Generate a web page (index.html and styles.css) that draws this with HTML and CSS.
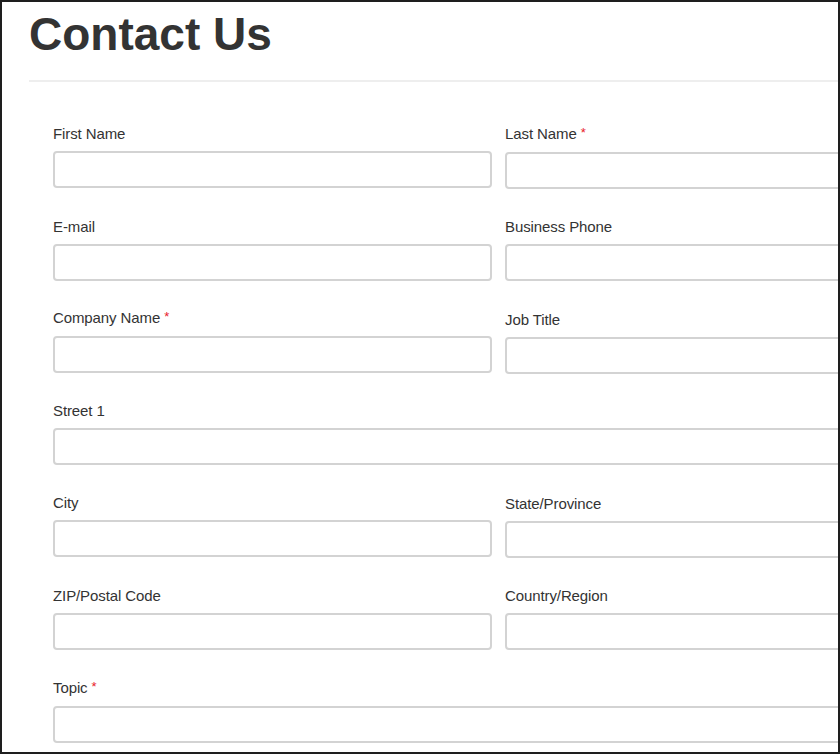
FILE: index.html
```html
<!DOCTYPE html>
<html lang="en">
<head>
<meta charset="utf-8">
<title>Contact Us</title>
<link rel="stylesheet" href="styles.css">
</head>
<body>
<div class="frame">
  <div class="page">
    <h1 class="title">Contact Us</h1>
    <hr class="rule">
    <form class="form">
      <div class="row">
        <div class="field"><label class="label">First Name</label><input class="input" type="text"></div>
        <div class="field"><label class="label">Last Name <span class="req">*</span></label><input class="input" type="text"></div>
      </div>
      <div class="row">
        <div class="field"><label class="label">E-mail</label><input class="input" type="text"></div>
        <div class="field"><label class="label">Business Phone</label><input class="input" type="text"></div>
      </div>
      <div class="row row-shift">
        <div class="field field-up"><label class="label">Company Name <span class="req">*</span></label><input class="input" type="text"></div>
        <div class="field field-down"><label class="label">Job Title</label><input class="input" type="text"></div>
      </div>
      <div class="row">
        <div class="field field-wide"><label class="label">Street 1</label><input class="input" type="text"></div>
      </div>
      <div class="row">
        <div class="field"><label class="label">City</label><input class="input" type="text"></div>
        <div class="field field-down"><label class="label">State/Province</label><input class="input" type="text"></div>
      </div>
      <div class="row">
        <div class="field"><label class="label">ZIP/Postal Code</label><input class="input" type="text"></div>
        <div class="field"><label class="label">Country/Region</label><input class="input" type="text"></div>
      </div>
      <div class="row">
        <div class="field field-wide"><label class="label">Topic <span class="req">*</span></label><input class="input" type="text"></div>
      </div>
    </form>
  </div>
</div>
</body>
</html>
```
FILE: styles.css
```css
html, body {
  margin: 0;
  padding: 0;
  background: #ffffff;
}

.frame {
  width: 840px;
  height: 754px;
  box-sizing: border-box;
  border: 2px solid #1e1e1e;
  overflow: hidden;
  background: #ffffff;
}

.page {
  width: 930px;
  padding-left: 27px;
  font-family: "Liberation Sans", Arial, sans-serif;
  color: #333333;
}

.title {
  margin: 7px 0 0 0;
  font-size: 46px;
  line-height: 50px;
  font-weight: bold;
  color: #333333;
}

.rule {
  margin: 21px 0 0 0;
  border: 0;
  height: 2px;
  background: #eeeeee;
}

.form {
  padding: 42px 0 0 24px;
  display: flex;
  flex-direction: column;
  gap: 28px;
}

.row {
  display: grid;
  grid-template-columns: 439px 439px;
  column-gap: 13px;
}

.field {
  display: flex;
  flex-direction: column;
}

.field-wide {
  grid-column: 1 / span 2;
}

.field-up {
  margin-top: -1px;
}

.field-down {
  margin-top: 1px;
}

.row-shift {
  margin-bottom: -1px;
}

.label {
  font-size: 15px;
  line-height: 20px;
  margin-bottom: 7px;
  color: #333333;
  letter-spacing: -0.1px;
}

.req {
  color: #e8202a;
  font-size: 13px;
  position: relative;
  top: -2px;
}

.input {
  box-sizing: border-box;
  height: 37px;
  width: 100%;
  margin: 0;
  border: 2px solid #d3d3d3;
  border-radius: 4px;
  background: #ffffff;
  padding: 4px 10px;
  font-family: "Liberation Sans", Arial, sans-serif;
  font-size: 14px;
}
```
